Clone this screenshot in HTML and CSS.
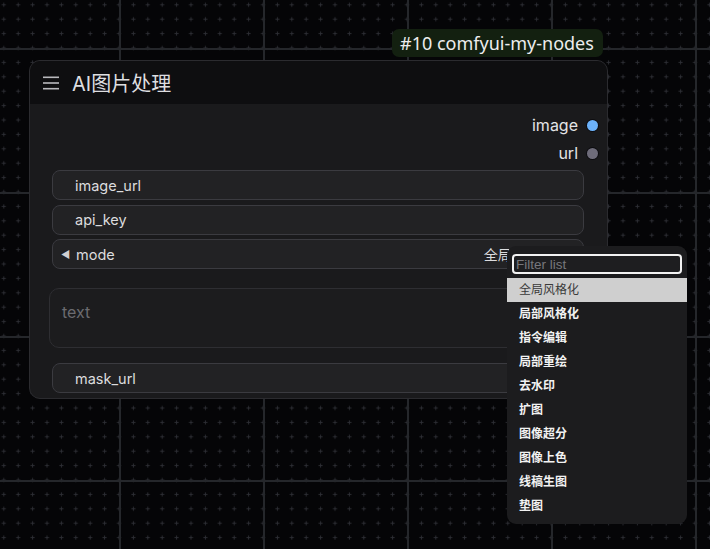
FILE: index.html
```html
<!DOCTYPE html>
<html lang="zh">
<head>
<meta charset="utf-8">
<title>AI图片处理</title>
<link rel="stylesheet" href="styles.css">
</head>
<body>
<div class="canvas">
  <svg class="grid" width="710" height="549" xmlns="http://www.w3.org/2000/svg">
    <defs>
      <pattern id="minor" patternUnits="userSpaceOnUse" x="-3.4" y="-2.4" width="14.4" height="14.4">
        <rect x="5.2" y="6.7" width="4" height="1" fill="#2c2d33"/>
        <rect x="6.7" y="5.2" width="1" height="4" fill="#2c2d33"/>
      </pattern>
      <pattern id="major" patternUnits="userSpaceOnUse" x="-25" y="-96" width="144" height="144">
        <rect x="0" y="0" width="144" height="2" fill="#25272b"/>
        <rect x="0" y="0" width="2" height="144" fill="#25272b"/>
      </pattern>
    </defs>
    <rect width="710" height="549" fill="url(#minor)"/>
    <rect width="710" height="549" fill="url(#major)"/>
  </svg>

  <div class="badge">#10 comfyui-my-nodes</div>

  <div class="node">
    <div class="node-title">
      <svg class="menu-icon" width="16" height="14" viewBox="0 0 16 14">
        <rect x="0" y="0.5" width="16" height="1.6" fill="#b8b8bc"/>
        <rect x="0" y="6.2" width="16" height="1.6" fill="#b8b8bc"/>
        <rect x="0" y="11.9" width="16" height="1.6" fill="#b8b8bc"/>
      </svg>
      <span class="title-text">AI图片处理</span>
    </div>
    <div class="node-body">
      <div class="outputs">
        <div class="out-row"><span>image</span><i class="slot slot-image"></i></div>
        <div class="out-row"><span>url</span><i class="slot slot-url"></i></div>
      </div>
      <div class="widgets">
        <div class="widget"><span class="wlabel">image_url</span></div>
        <div class="widget"><span class="wlabel">api_key</span></div>
        <div class="widget combo">
          <span class="arrow">◀</span><span class="wlabel">mode</span>
          <span class="wvalue">全局风格化</span><span class="arrow arrow-r">▶</span>
        </div>
      </div>
      <div class="textarea"><span class="placeholder">text</span></div>
      <div class="widget mask"><span class="wlabel">mask_url</span></div>
    </div>
  </div>

  <div class="dropdown">
    <div class="filter"><span>Filter list</span></div>
    <ul class="items">
      <li class="active">全局风格化</li>
      <li>局部风格化</li>
      <li>指令编辑</li>
      <li>局部重绘</li>
      <li>去水印</li>
      <li>扩图</li>
      <li>图像超分</li>
      <li>图像上色</li>
      <li>线稿生图</li>
      <li>垫图</li>
    </ul>
  </div>
</div>
</body>
</html>
```
FILE: styles.css
```css
html, body {
  margin: 0;
  padding: 0;
  background: #050507;
}

.canvas {
  position: relative;
  width: 710px;
  height: 549px;
  overflow: hidden;
  background: #050507;
  font-family: Inter, "Noto Sans CJK SC", sans-serif;
}

.grid {
  position: absolute;
  left: 0;
  top: 0;
}

.badge {
  position: absolute;
  left: 392px;
  top: 29px;
  height: 28px;
  width: 211px;
  box-sizing: border-box;
  padding-left: 8px;
  border-radius: 7px;
  background: #132010;
  color: #ededed;
  font-family: "Noto Sans", "Noto Sans CJK SC", sans-serif;
  font-size: 18px;
  line-height: 28px;
  white-space: nowrap;
}

.node {
  position: absolute;
  left: 29px;
  top: 60px;
  width: 579px;
  height: 339px;
  box-sizing: border-box;
  border: 1px solid #2b2b2f;
  border-radius: 11px;
  background: #1a1a1c;
  overflow: hidden;
}

.node-title {
  height: 43px;
  background: #0e0e10;
  display: flex;
  align-items: center;
  padding-left: 13px;
  gap: 13px;
}

.menu-icon {
  display: block;
  margin-top: 1px;
}

.title-text {
  color: #dedee0;
  font-family: Inter, "Noto Sans CJK SC", sans-serif;
  font-size: 20px;
  letter-spacing: 0;
}

.node-body {
  padding: 7px 0 0 0;
}

.outputs {
  display: flex;
  flex-direction: column;
  align-items: flex-end;
  padding-right: 9px;
}

.out-row {
  height: 28px;
  display: flex;
  align-items: center;
  gap: 9px;
  color: #e4e4e6;
  font-size: 16px;
}

.slot {
  display: block;
  width: 11px;
  height: 11px;
  border-radius: 50%;
  box-shadow: 0 0 0 1px #0c0c10;
}

.slot-image { background: #6cb2fa; }
.slot-url { background: #6e6c7a; }

.widgets {
  display: flex;
  flex-direction: column;
  gap: 4.5px;
  margin-top: 3px;
}

.widget {
  margin-left: 22px;
  width: 532px;
  height: 30px;
  box-sizing: border-box;
  border: 1px solid #3b3b40;
  border-radius: 8px;
  background: #222224;
  display: flex;
  align-items: center;
  padding-left: 22px;
  color: #dcdcde;
  font-size: 14.5px;
}

.combo {
  padding-left: 8px;
}

.arrow {
  font-size: 10px;
  color: #d0d0d2;
  width: 15px;
}

.arrow-r {
  width: auto;
  margin-left: 10px;
  margin-right: 10px;
}

.wvalue {
  margin-left: auto;
  font-size: 14px;
  color: #dcdcde;
}

.textarea {
  margin: 19px 0 0 19px;
  width: 537px;
  height: 60px;
  box-sizing: border-box;
  border: 1px solid #2e2e32;
  border-radius: 10px;
  background: #1c1c1e;
  padding: 13px 0 0 12px;
}

.placeholder {
  color: #6b6b70;
  font-size: 16px;
}

.mask {
  margin-top: 15px;
}

.dropdown {
  position: absolute;
  left: 507px;
  top: 246px;
  width: 180px;
  height: 278px;
  border-radius: 9px;
  background: #1c1c1e;
  box-sizing: border-box;
  padding-top: 8px;
  font-family: "Noto Sans CJK SC", sans-serif;
}

.filter {
  margin: 0 5px;
  height: 20px;
  box-sizing: border-box;
  border: 2px solid #f2f2f2;
  border-radius: 4px;
  background: #1e1e20;
  padding-left: 2px;
  display: flex;
  align-items: center;
}

.filter span {
  color: #77777c;
  font-family: "Liberation Sans", sans-serif;
  font-size: 13.5px;
}

.items {
  list-style: none;
  margin: 4px 0 0 0;
  padding: 0;
}

.items li {
  height: 24px;
  line-height: 22px;
  padding-left: 12px;
  font-size: 12px;
  font-weight: bold;
  color: #f2f2f2;
}

.items li.active {
  background: #cfcfcf;
  color: #3a3a3a;
  font-weight: normal;
}
```
